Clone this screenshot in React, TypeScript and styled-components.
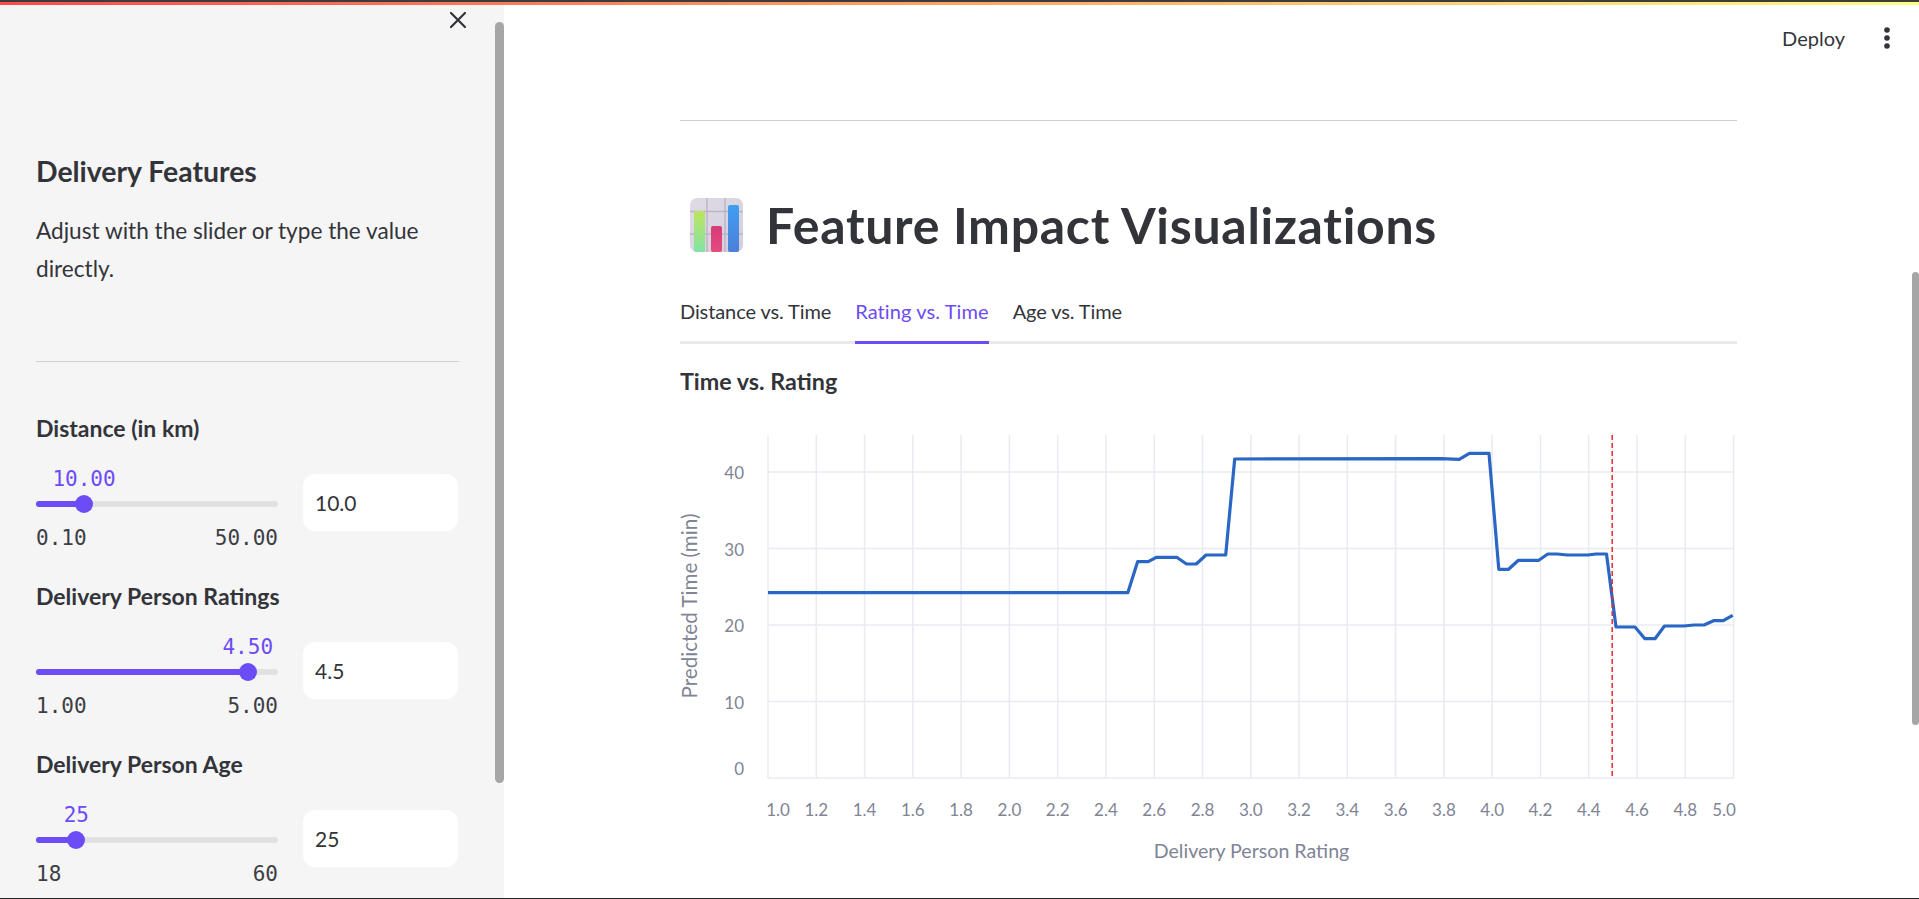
import React from 'react';
import styled, { createGlobalStyle } from 'styled-components';

const sans = `'Lato', 'Noto Sans', sans-serif`;
const mono = `'DejaVu Sans Mono', monospace`;
const purple = '#6b4cf6';
const ink = '#33343a';

const GlobalStyle = createGlobalStyle`
  html, body {
    margin: 0;
    padding: 0;
    height: 100%;
    overflow: hidden;
    background: #ffffff;
  }
  * { box-sizing: border-box; }
`;

const Frame = styled.div`
  height: 899px;
  display: flex;
  flex-direction: column;
  overflow: hidden;
  font-family: ${sans};
  color: ${ink};
  border-top: 2px solid #3c3c3c;
  border-bottom: 1px solid #222222;
`;

const Decoration = styled.div`
  height: 3px;
  flex: none;
  background-image: linear-gradient(90deg, #ff4b4b, #fffd80);
`;

const Body = styled.div`
  flex: 1;
  min-height: 0;
  display: flex;
`;

const Sidebar = styled.aside`
  width: 504px;
  flex: none;
  position: relative;
  background: #f5f5f5;
  padding: 0 45px 0 36px;
  overflow: hidden;
`;

const SidebarHead = styled.div`
  height: 30px;
  display: flex;
  justify-content: flex-end;
  align-items: center;
  margin-right: -8px;
`;

const SidebarTitle = styled.h2`
  margin: 116px 0 0;
  font-size: 28.4px;
  line-height: 40px;
  font-weight: 700;
`;

const SidebarText = styled.p`
  margin: 21px 0 0;
  font-size: 22.6px;
  line-height: 38px;
  font-weight: 400;
`;

const Rule = styled.hr`
  margin: ${p => p.$top}px 0 ${p => p.$bottom ?? 0}px;
  height: 1px;
  border: none;
  background: #cfcfd2;
`;

const Scrollbar = styled.div`
  position: absolute;
  right: ${p => p.$right}px;
  top: ${p => p.$top}px;
  width: ${p => p.$width}px;
  height: ${p => p.$height}px;
  background: #a6a6a6;
  border-radius: 5px;
`;

const Field = styled.div`
  height: 168px;
`;

const FieldLabel = styled.div`
  font-size: 23px;
  line-height: 34px;
  font-weight: 700;
`;

const FieldRow = styled.div`
  margin-top: 17px;
  display: grid;
  grid-template-columns: 242px 155px;
  column-gap: 25px;
`;

const SliderBlock = styled.div`
  padding-top: 34px;
`;

const Track = styled.div`
  position: relative;
  height: 6px;
  margin: 5px 0;
  border-radius: 3px;
  background: #e2e2e2;
`;

const TrackFill = styled.div`
  height: 100%;
  border-radius: 3px;
  background: ${purple};
`;

const Thumb = styled.div`
  position: absolute;
  top: 50%;
  width: 18px;
  height: 18px;
  border-radius: 50%;
  background: ${purple};
  transform: translate(-50%, -50%);
`;

const ThumbValue = styled.div`
  position: absolute;
  bottom: 15px;
  transform: translateX(-50%);
  font-family: ${mono};
  font-size: 21px;
  line-height: 26px;
  color: ${purple};
`;

const Ticks = styled.div`
  display: flex;
  justify-content: space-between;
  margin-top: 14px;
  font-family: ${mono};
  font-size: 21px;
  line-height: 34px;
  color: #3d3e44;
`;

const NumberBox = styled.div`
  margin-top: 12px;
  height: 57px;
  padding-left: 12px;
  display: flex;
  align-items: center;
  background: #ffffff;
  border-radius: 12px;
  font-size: 21px;
`;

const Main = styled.main`
  flex: 1;
  min-width: 0;
  position: relative;
  overflow: hidden;
`;

const Toolbar = styled.div`
  height: 66px;
  display: flex;
  justify-content: flex-end;
  align-items: center;
  gap: 39px;
  padding-right: 29px;
`;

const DeployButton = styled.span`
  font-size: 20px;
  line-height: 28px;
`;

const Content = styled.div`
  padding: 0 182px 0 176px;
`;

const TitleRow = styled.div`
  margin-top: 64px;
  height: 80px;
  display: flex;
  align-items: center;
  padding-left: 10px;
  gap: 23px;
`;

const PageTitle = styled.h1`
  margin: 0;
  font-size: 50px;
  line-height: 80px;
  font-weight: 700;
  letter-spacing: 0.7px;
`;

const Tabs = styled.div`
  margin-top: 20px;
  display: flex;
  gap: 24px;
  border-bottom: 3px solid #eaeaec;
`;

const Tab = styled.div`
  height: 59px;
  margin-bottom: -3px;
  display: flex;
  align-items: center;
  padding-bottom: 5px;
  font-size: 20px;
  letter-spacing: ${p => (p.$active ? '0.1px' : '-0.1px')};
  color: ${p => (p.$active ? purple : ink)};
  border-bottom: 3px solid ${p => (p.$active ? purple : 'transparent')};
`;

const ChartTitle = styled.h3`
  margin: 17px 0 0;
  font-size: 23.3px;
  line-height: 40px;
  font-weight: 700;
`;

const ChartSvg = styled.svg`
  display: block;
  margin-top: 19px;
  overflow: visible;
  font-family: ${sans};
`;

const fields = [
  { label: 'Distance (in km)', min: 0.1, max: 50, value: 10, digits: 2, boxValue: '10.0' },
  { label: 'Delivery Person Ratings', min: 1, max: 5, value: 4.5, digits: 2, boxValue: '4.5' },
  { label: 'Delivery Person Age', min: 18, max: 60, value: 25, digits: 0, boxValue: '25' },
];

const tabs = ['Distance vs. Time', 'Rating vs. Time', 'Age vs. Time'];

// chart coordinates are page pixels, the svg's viewBox starts at 680,420
const xForRating = (r: number) => 768 + (r - 1) * 241.4;
const yForTime = (t: number) => 778 - t * 7.65;

const linePoints = [
  [768, 592.7], [1127.8, 592.7], [1137.6, 561.7], [1148.2, 561.7], [1156.3, 557.3], [1176.7, 557.3],
  [1186.5, 564], [1196.3, 564], [1206, 555], [1225.7, 555], [1234.7, 459], [1440.8, 458.7],
  [1459.2, 459.3], [1469.4, 453.3], [1489, 453.3], [1498.8, 569.3], [1508.6, 569.3], [1518.4, 560.3],
  [1538.8, 560.3], [1547.8, 554], [1557, 554], [1567.3, 555], [1587.8, 555], [1596, 554], [1606.5, 554],
  [1616, 627], [1635, 627], [1644.9, 638.7], [1655, 638.7], [1664.5, 626], [1683.7, 626], [1693.9, 625],
  [1704, 625], [1713.5, 620.7], [1723.3, 620.7], [1732.7, 615.3],
];

const xTicks = Array.from({ length: 21 }, (_, i) => 1 + i * 0.2);
const yTicks = [0, 10, 20, 30, 40];

function TitleEmoji() {
  return (
    <svg width="53" height="54" viewBox="0 0 53 54">
      <defs>
        <linearGradient id="emojiBg" x1="0" y1="0" x2="1" y2="1">
          <stop offset="0" stopColor="#e0dce6" />
          <stop offset="1" stopColor="#d3cedc" />
        </linearGradient>
        <linearGradient id="emojiGreen" x1="0" y1="0" x2="0" y2="1">
          <stop offset="0" stopColor="#bde45f" />
          <stop offset="1" stopColor="#82e3a4" />
        </linearGradient>
        <linearGradient id="emojiPink" x1="0" y1="0" x2="0" y2="1">
          <stop offset="0" stopColor="#d63c78" />
          <stop offset="1" stopColor="#e54a80" />
        </linearGradient>
        <linearGradient id="emojiBlue" x1="0" y1="0" x2="0" y2="1">
          <stop offset="0" stopColor="#3f9ff2" />
          <stop offset="1" stopColor="#4b7fd8" />
        </linearGradient>
      </defs>
      <rect width="53" height="54" rx="7" fill="url(#emojiBg)" />
      <path d="M17 0V54M35 0V54M0 13.5H53M0 36H53" stroke="#bab4c4" strokeWidth="1.4" />
      <rect x="4" y="13" width="11" height="41" rx="2" fill="url(#emojiGreen)" />
      <rect x="21" y="28" width="11" height="26" rx="2" fill="url(#emojiPink)" />
      <rect x="38" y="7" width="11" height="47" rx="2" fill="url(#emojiBlue)" />
    </svg>
  );
}

function ChartView() {
  return (
    <ChartSvg width="1057" height="470" viewBox="680 420 1057 470">
      <g stroke="#e9ebf2" strokeWidth="1.5">
        {xTicks.map(t => (
          <line key={t} x1={xForRating(t)} x2={xForRating(t)} y1={435} y2={778} />
        ))}
        {yTicks.map(t => (
          <line key={t} x1={768} x2={1734} y1={yForTime(t)} y2={yForTime(t)} />
        ))}
      </g>
      <polyline
        points={linePoints.map(p => p.join(',')).join(' ')}
        fill="none"
        stroke="#2a67c5"
        strokeWidth="3.2"
        strokeLinejoin="round"
      />
      <line x1={1612.2} x2={1612.2} y1={435} y2={778} stroke="#e8292e" strokeWidth="1.5" strokeDasharray="5 3" />
      <g fill="#808495" fontSize="17">
        {xTicks.map((t, i) => {
          let x = xForRating(t);
          // the two end labels are pulled inside the plot
          if (i === 0) x = 778;
          if (i === xTicks.length - 1) x = 1724;
          return (
            <text key={t} x={x} y={816} textAnchor="middle">
              {t.toFixed(1)}
            </text>
          );
        })}
        {yTicks.map(t => (
          <text key={t} x={744} y={t === 0 ? 775 : yForTime(t) + 7} textAnchor="end">
            {t}
          </text>
        ))}
        <text x={1251.5} y={858} textAnchor="middle" fontSize="19.6">
          Delivery Person Rating
        </text>
        <text x={697} y={606} textAnchor="middle" fontSize="20.6" transform="rotate(-90 697 606)">
          Predicted Time (min)
        </text>
      </g>
    </ChartSvg>
  );
}

function SliderField({ label, min, max, value, digits, boxValue }: (typeof fields)[number]) {
  const pct = ((value - min) / (max - min)) * 100;
  return (
    <Field>
      <FieldLabel>{label}</FieldLabel>
      <FieldRow>
        <SliderBlock>
          <Track>
            <TrackFill style={{ width: `${pct}%` }} />
            <Thumb style={{ left: `${pct}%` }} />
            <ThumbValue style={{ left: `${pct}%` }}>{value.toFixed(digits)}</ThumbValue>
          </Track>
          <Ticks>
            <span>{min.toFixed(digits)}</span>
            <span>{max.toFixed(digits)}</span>
          </Ticks>
        </SliderBlock>
        <NumberBox>{boxValue}</NumberBox>
      </FieldRow>
    </Field>
  );
}

export default function App() {
  return (
    <>
      <GlobalStyle />
      <Frame>
        <Decoration />
        <Body>
          <Sidebar>
            <SidebarHead>
              <svg width="18" height="18" viewBox="0 0 18 18">
                <path d="M2 2L16 16M16 2L2 16" stroke="#33343a" strokeWidth="2.2" strokeLinecap="round" />
              </svg>
            </SidebarHead>
            <SidebarTitle>Delivery Features</SidebarTitle>
            <SidebarText>Adjust with the slider or type the value directly.</SidebarText>
            <Rule $top={73} $bottom={49} />
            {fields.map(f => (
              <SliderField key={f.label} {...f} />
            ))}
            <Scrollbar $right={0} $top={17} $width={9} $height={761} />
          </Sidebar>
          <Main>
            <Toolbar>
              <DeployButton>Deploy</DeployButton>
              <svg width="6" height="22" viewBox="0 0 6 22">
                <circle cx="3" cy="3" r="2.8" fill="#33343a" />
                <circle cx="3" cy="11" r="2.8" fill="#33343a" />
                <circle cx="3" cy="19" r="2.8" fill="#33343a" />
              </svg>
            </Toolbar>
            <Content>
              <Rule $top={49} />
              <TitleRow>
                <TitleEmoji />
                <PageTitle>Feature Impact Visualizations</PageTitle>
              </TitleRow>
              <Tabs>
                {tabs.map(t => (
                  <Tab key={t} $active={t === 'Rating vs. Time'}>
                    {t}
                  </Tab>
                ))}
              </Tabs>
              <ChartTitle>Time vs. Rating</ChartTitle>
              <ChartView />
            </Content>
            <Scrollbar $right={0} $top={267} $width={7} $height={453} />
          </Main>
        </Body>
      </Frame>
    </>
  );
}
